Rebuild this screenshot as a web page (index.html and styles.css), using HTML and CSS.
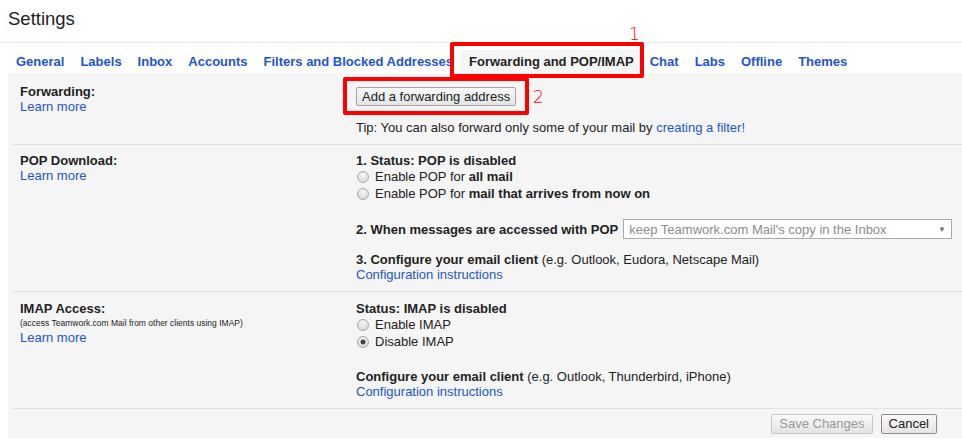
FILE: index.html
```html
<!DOCTYPE html>
<html>
<head>
<meta charset="utf-8">
<title>Settings</title>
<link rel="stylesheet" href="styles.css">
</head>
<body>
<div class="page">
  <header class="head"><h1>Settings</h1></header>
  <nav class="tabs">
    <a class="tab" href="#">General</a>
    <a class="tab" href="#">Labels</a>
    <a class="tab" href="#">Inbox</a>
    <a class="tab" href="#">Accounts</a>
    <a class="tab" href="#">Filters and Blocked Addresses</a>
    <a class="tab active" href="#">Forwarding and POP/IMAP</a>
    <a class="tab" href="#">Chat</a>
    <a class="tab" href="#">Labs</a>
    <a class="tab" href="#">Offline</a>
    <a class="tab" href="#">Themes</a>
  </nav>
  <div class="panel">
    <section class="row row-fwd">
      <div class="lab">
        <div class="title">Forwarding:</div>
        <a class="link" href="#">Learn more</a>
      </div>
      <div class="val">
        <button class="btn btn-fwd">Add a forwarding address</button>
        <div class="tip">Tip: You can also forward only some of your mail by <a class="link" href="#">creating a filter!</a></div>
      </div>
    </section>
    <section class="row row-pop">
      <div class="lab">
        <div class="title">POP Download:</div>
        <a class="link" href="#">Learn more</a>
      </div>
      <div class="val">
        <div class="title">1. Status: POP is disabled</div>
        <label class="opt"><input type="radio" name="pop" class="radio"><span>Enable POP for <b>all mail</b></span></label>
        <label class="opt"><input type="radio" name="pop" class="radio"><span>Enable POP for <b>mail that arrives from now on</b></span></label>
        <div class="when">
          <span class="title">2. When messages are accessed with POP</span>
          <div class="select"><span class="sel-text">keep Teamwork.com Mail's copy in the Inbox</span><span class="sel-arrow">▼</span></div>
        </div>
        <div class="config"><b>3. Configure your email client</b> (e.g. Outlook, Eudora, Netscape Mail)</div>
        <a class="link" href="#">Configuration instructions</a>
      </div>
    </section>
    <section class="row row-imap">
      <div class="lab">
        <div class="title">IMAP Access:</div>
        <div class="small">(access Teamwork.com Mail from other clients using IMAP)</div>
        <a class="link" href="#">Learn more</a>
      </div>
      <div class="val">
        <div class="title">Status: IMAP is disabled</div>
        <label class="opt"><input type="radio" name="imap" class="radio"><span>Enable IMAP</span></label>
        <label class="opt"><input type="radio" name="imap" class="radio" checked><span>Disable IMAP</span></label>
        <div class="config config-imap"><b>Configure your email client</b> (e.g. Outlook, Thunderbird, iPhone)</div>
        <a class="link" href="#">Configuration instructions</a>
      </div>
    </section>
    <div class="actions">
      <button class="btn btn-save" disabled>Save Changes</button>
      <button class="btn btn-cancel">Cancel</button>
    </div>
  </div>
  <div class="mark mark-1"></div>
  <div class="mark mark-2"></div>
  <span class="num num-1">1</span>
  <span class="num num-2">2</span>
</div>
</body>
</html>
```
FILE: styles.css
```css
* { box-sizing: border-box; }
body {
  margin: 0;
  background: #fff;
  color: #222;
  font-family: Arial, "Liberation Sans", sans-serif;
  font-size: 13px;
}
.page { position: relative; width: 962px; height: 445px; }
.head {
  height: 43px;
  border-bottom: 1px solid #e5e5e5;
  padding: 8px 0 0 8px;
}
.head h1 {
  margin: 0;
  font-weight: normal;
  font-size: 18.5px;
  line-height: 22px;
  color: #222;
}
.tabs { display: flex; height: 30px; padding: 7px 0 0 8px; }
.tab {
  padding: 4px 8px;
  line-height: 15px;
  font-weight: bold;
  color: #2255cc;
  text-decoration: none;
}
.tab.active { background: #f5f5f5; color: #222; }
.panel { margin-left: 8px; background: #f5f5f5; padding-left: 4px; }
.row {
  display: grid;
  grid-template-columns: 336px 1fr;
  padding: 0 10px 9px 8px;
  border-bottom: 1px solid #e2e2e2;
  line-height: 15px;
}
.row-fwd { padding-top: 11px; }
.row-pop { padding-top: 8px; }
.row-imap { padding-top: 9px; }
.lab, .val { display: flex; flex-direction: column; align-items: flex-start; }
.title { font-weight: bold; }
.link { color: #2255cc; text-decoration: none; }
.small { font-size: 8.5px; line-height: 14px; color: #222; }
.btn {
  font-family: Arial, "Liberation Sans", sans-serif;
  font-size: 13px;
  color: #222;
  border: 1px solid #a3a3a3;
  border-radius: 2px;
  background: linear-gradient(#f9f9f9, #e4e4e4);
  padding: 0 6px;
  height: 20px;
  line-height: 18px;
}
.btn-fwd { margin-top: 3px; height: 19px; line-height: 17px; padding: 0 5px; }
.tip { margin-top: 14px; }
.opt { display: flex; align-items: center; height: 17px; }
.radio {
  appearance: none;
  -webkit-appearance: none;
  margin: 0 6px 0 1px;
  width: 12px;
  height: 12px;
  border-radius: 50%;
  border: 1px solid #a9a9a9;
  background: radial-gradient(circle at 50% 30%, #f6f6f6, #d2d2d2);
}
.radio:checked {
  background: radial-gradient(circle, #444 0 2.2px, transparent 2.8px), radial-gradient(circle at 50% 30%, #f6f6f6, #d2d2d2);
}
.when {
  display: flex;
  align-items: center;
  height: 20px;
  margin-top: 17px;
  width: 100%;
}
.select {
  flex: 1;
  margin-left: 5px;
  height: 20px;
  border: 1px solid #aaa;
  background: #fff;
  display: flex;
  align-items: center;
  justify-content: space-between;
  padding: 0 5px;
}
.sel-text { color: #8c8c8c; }
.sel-arrow { color: #6d6d6d; font-size: 8px; }
.config { margin-top: 13px; }
.config-imap { margin-top: 19px; }
.actions {
  display: flex;
  justify-content: flex-end;
  gap: 8px;
  padding: 5px 25px 4px 0;
}
.btn-save { color: #999; border-color: #c8c8c8; padding: 0 7px; }
.btn-cancel { border-color: #8d8d8d; padding: 0 7px; }
.mark {
  position: absolute;
  border: 4px solid #f00;
  border-radius: 2px;
}
.mark-1 { left: 450px; top: 42px; width: 194px; height: 36px; }
.mark-2 { left: 343px; top: 77px; width: 186px; height: 38px; }
.num {
  position: absolute;
  color: #f00;
  font-family: "DejaVu Sans", sans-serif;
  font-weight: 200;
  font-size: 17px;
  line-height: 18px;
}
.num-1 { left: 629px; top: 25px; }
.num-2 { left: 533px; top: 88px; }
```
